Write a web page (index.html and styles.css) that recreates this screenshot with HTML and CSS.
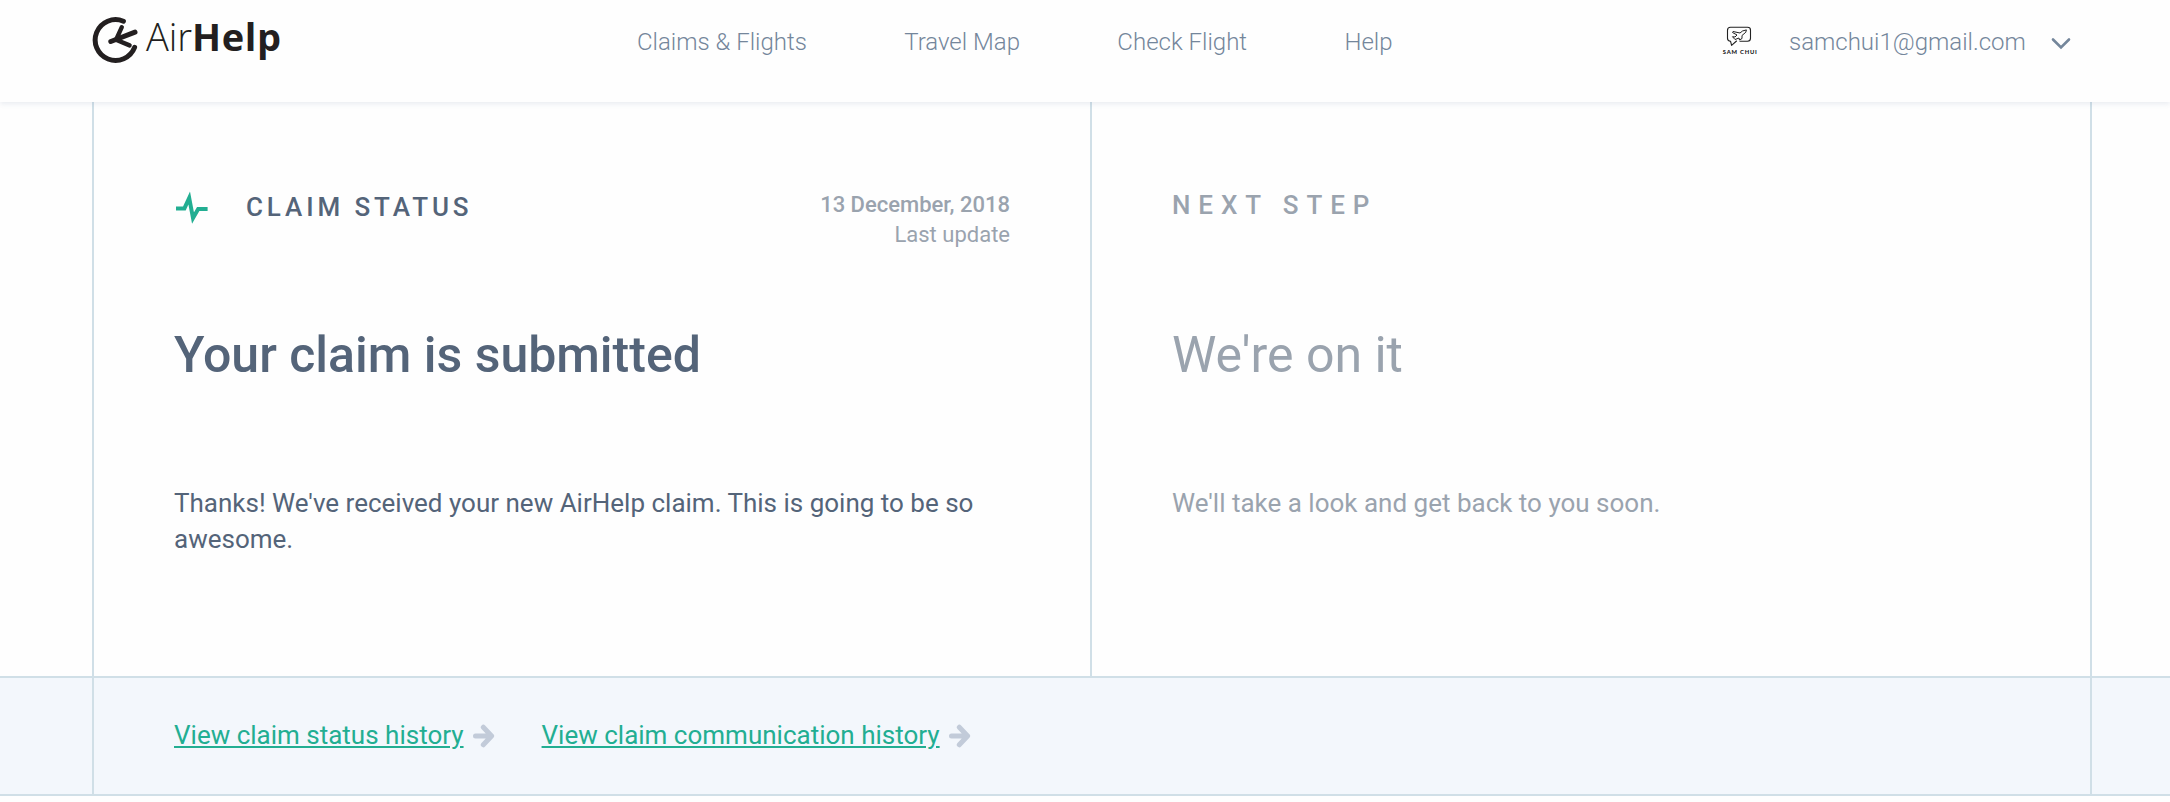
FILE: index.html
```html
<!DOCTYPE html>
<html lang="en">
<head>
    <meta charset="UTF-8">
    <meta name="viewport" content="width=device-width, initial-scale=1.0">
    <title>AirHelp - Claim status</title>
    <link rel="stylesheet" href="styles.css">
</head>
<body>
    <header class="header">
        <a class="logo" href="#">
            <svg width="200" height="80" viewBox="90 0 200 80">
                <g fill="none" stroke="#231f20" stroke-width="5" stroke-linecap="round" stroke-linejoin="round">
                    <path d="M123.4 21.2 A20.4 20.4 0 1 0 134.6 47.4"/>
                    <path d="M110.8 41.5 L135 32.2"/>
                    <path d="M121.8 27.2 L116 39.8 L129.6 45.4" stroke-width="4.4"/>
                </g>
                <text class="logo-air" x="146" y="51" textLength="46">Air</text>
                <text class="logo-help" x="192" y="51" textLength="89">Help</text>
            </svg>
        </a>

        <nav class="nav">
            <a href="#">Claims &amp; Flights</a>
            <a href="#">Travel Map</a>
            <a href="#">Check Flight</a>
            <a href="#">Help</a>
        </nav>

        <div class="account">
            <svg class="avatar" width="36" height="32" viewBox="0 0 36 32">
                <g fill="none" stroke="#222" stroke-linejoin="round" stroke-linecap="round">
                    <path d="M18 15.2 H25.5 Q28.5 15.2 28.5 12.2 V4.2 Q28.5 1.2 25.5 1.2 H8.5 Q5.5 1.2 5.5 4.2 V12.2 Q5.5 15 8.5 15.2 L9.6 19.4 L14.5 15" stroke-width="1.1"/>
                    <path d="M24 4 L20.5 5 L18 7 L11 5.5 L10.5 6.5 L15 9 L13 11 L10.5 10.7 L13 13.5 L17 12 L17.5 14 L20 12.5 L20 9.5 L23.5 6.5 Z" stroke-width="1"/>
                </g>
                <text class="avatar-name" x="0.8" y="27.5" textLength="34">SAM CHUI</text>
            </svg>
            <span class="email">samchui1@gmail.com</span>
            <svg class="chevron" width="20" height="14" viewBox="0 0 20 14">
                <path d="M2 2.5 L10 10.5 L18 2.5" fill="none" stroke="#74869b" stroke-width="2.6" stroke-linecap="round"/>
            </svg>
        </div>
    </header>

    <main>
        <div class="claim">
            <section class="card">
                <div class="card-top">
                    <svg class="pulse" width="34" height="36" viewBox="0 0 34 36">
                        <path d="M2 18.4 H10.4 L15.2 8 L19 28 L24.2 18.9 H33.6" fill="none" stroke="#22ae92" stroke-width="4" stroke-miterlimit="10"/>
                    </svg>
                    <h3 class="label">CLAIM STATUS</h3>
                    <div class="updated">
                        <strong>13 December, 2018</strong>
                        <span>Last update</span>
                    </div>
                </div>
                <h1>Your claim is submitted</h1>
                <p>Thanks! We've received your new AirHelp claim. This is going to be so awesome.</p>
            </section>

            <section class="card next">
                <div class="card-top">
                    <h3 class="label">NEXT STEP</h3>
                </div>
                <h1>We're on it</h1>
                <p>We'll take a look and get back to you soon.</p>
            </section>
        </div>

        <div class="history">
            <div class="history-links">
                <a href="#">View claim status history</a>
                <svg class="arrow" width="22" height="24" viewBox="0 0 22 24">
                    <path d="M2.5 12 H18 M10.3 3.2 L18.6 12 L10.3 20.8" fill="none" stroke="#c2cbd9" stroke-width="5" stroke-linecap="round" stroke-linejoin="round"/>
                </svg>
                <a class="second" href="#">View claim communication history</a>
                <svg class="arrow" width="22" height="24" viewBox="0 0 22 24">
                    <path d="M2.5 12 H18 M10.3 3.2 L18.6 12 L10.3 20.8" fill="none" stroke="#c2cbd9" stroke-width="5" stroke-linecap="round" stroke-linejoin="round"/>
                </svg>
            </div>
        </div>
    </main>
</body>
</html>
```
FILE: styles.css
```css
* {
    box-sizing: border-box;
}

body {
    font-family: Roboto, sans-serif;
    margin: 0;
    background-color: #fefefe;
    color: #546479;
}

h1, h3, p {
    margin: 0;
}

.header {
    position: relative;
    display: flex;
    align-items: flex-start;
    height: 102px;
    padding-left: 90px;
    background-color: #fefefe;
    box-shadow: 0 2px 5px rgba(84, 110, 150, 0.12);
}

.logo {
    width: 547px;
}

.logo svg {
    display: block;
}

.logo text {
    font-family: "Open Sans", sans-serif;
    font-size: 38px;
    fill: #231f20;
}

.logo .logo-air {
    font-weight: 300;
}

.logo .logo-help {
    font-weight: 700;
}

.nav {
    display: flex;
    gap: 97.4px;
    width: 1085px;
}

.nav a, .email {
    font-size: 24px;
    font-weight: 300;
    line-height: 84px;
    color: #74869b;
    text-decoration: none;
    white-space: nowrap;
}

.account {
    display: flex;
}

.avatar {
    margin-top: 26px;
}

.avatar-name {
    font-family: Lato, sans-serif;
    font-size: 5.8px;
    font-weight: 900;
    fill: #222;
}

.email {
    margin-left: 31px;
    width: 262px;
}

.chevron {
    margin-top: 37px;
}

.claim {
    display: grid;
    grid-template-columns: 998px 1000px;
    width: 2000px;
    height: 574px;
    margin-left: 92px;
    border-right: 2px solid #d0dfe7;
}

.card {
    padding: 86px 80px 0 80px;
    border-left: 2px solid #d0dfe7;
}

.card-top {
    display: flex;
    align-items: flex-start;
    height: 136px;
}

.pulse {
    margin-right: 38px;
    margin-top: 2px;
}

.label {
    font-size: 26px;
    font-weight: 500;
    line-height: 38px;
    letter-spacing: 3.9px;
}

.updated {
    display: flex;
    flex-direction: column;
    margin-left: auto;
    padding-top: 2px;
    font-size: 22px;
    line-height: 30px;
    text-align: right;
    color: #9aa3ae;
}

.updated strong {
    font-weight: 500;
}

.card h1 {
    font-size: 50px;
    font-weight: 500;
    line-height: 62px;
}

.card p {
    margin-top: 99px;
    font-size: 26px;
    line-height: 36px;
}

.next {
    color: #9aa3ae;
}

.next .label {
    line-height: 34px;
    letter-spacing: 7.9px;
}

.next h1 {
    font-weight: 400;
}

.history {
    height: 120px;
    padding-left: 92px;
    background-color: #f3f7fc;
    border-top: 2px solid #d0dfe7;
    border-bottom: 2px solid #d0dfe7;
}

.history-links {
    display: flex;
    width: 2000px;
    height: 116px;
    padding-left: 80px;
    border-left: 2px solid #d0dfe7;
    border-right: 2px solid #d0dfe7;
}

.history-links a {
    font-size: 26px;
    line-height: 114px;
    color: #22ae92;
    text-decoration-thickness: 2px;
    text-underline-offset: 2px;
}

.history-links .second {
    margin-left: 47px;
}

.arrow {
    margin-top: 46px;
    margin-left: 9px;
}
```
